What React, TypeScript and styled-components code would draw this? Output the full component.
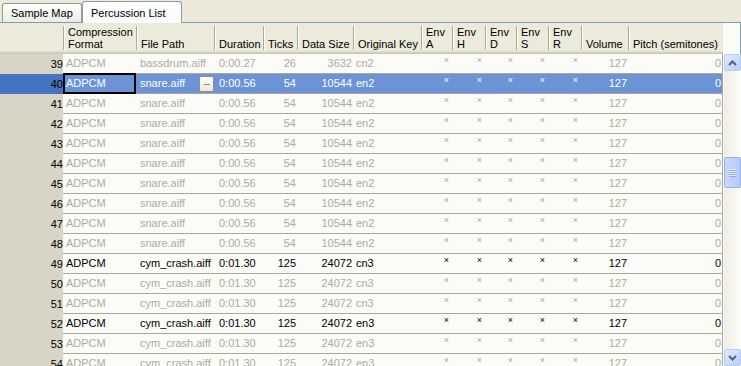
import styled, { createGlobalStyle } from 'styled-components';

const COLS = '63px 73px 78px 49px 34px 56px 68px 31px 33px 31px 32px 33px 47px 95px';

const GlobalStyle = createGlobalStyle`
  html, body {
    margin: 0;
    padding: 0;
    background: #ece9d8;
  }
  body {
    font-family: "Liberation Sans", Arial, sans-serif;
    font-size: 11px;
    overflow: hidden;
  }
`;

const Window = styled.div`
  width: 741px;
  height: 366px;
  overflow: hidden;
  display: flex;
  flex-direction: column;
  background: #ece9d8;
`;

const TabStrip = styled.div`
  height: 23px;
  flex-shrink: 0;
  display: flex;
  align-items: flex-end;
  padding-left: 2px;
  border-bottom: 1px solid #7f9db9;
  box-sizing: border-box;
`;

const Tab = styled.div<{ $active?: boolean; $width: number }>`
  width: ${(p) => p.$width}px;
  height: ${(p) => (p.$active ? 22 : 19)}px;
  margin-bottom: ${(p) => (p.$active ? '-1px' : '0')};
  padding-left: 8px;
  box-sizing: border-box;
  border: 1px solid #919b9c;
  border-bottom: none;
  border-radius: 3px 3px 0 0;
  background: ${(p) => (p.$active ? '#fcfcfe' : 'linear-gradient(#ffffff, #ecebe6)')};
  display: flex;
  align-items: center;
  color: #000;
  z-index: ${(p) => (p.$active ? 1 : 0)};
`;

const HeaderRow = styled.div`
  display: grid;
  grid-template-columns: ${COLS} 18px;
  height: 31px;
  flex-shrink: 0;
  background: #ebeadb;
  box-shadow: inset 0 -1px #cbc7b8, inset 0 -2px #d6d2c2, inset 0 -3px #e2decd;
`;

const HeaderCell = styled.div<{ $first?: boolean }>`
  margin: 3px 0 4px;
  padding-left: 4px;
  border-left: ${(p) => (p.$first ? 'none' : '1px solid #aca899')};
  box-shadow: ${(p) => (p.$first ? 'none' : 'inset 1px 0 #ffffff')};
  display: flex;
  flex-direction: column;
  justify-content: flex-end;
  line-height: 12px;
  white-space: nowrap;
  overflow: hidden;
  color: #000;
`;

const HeaderFiller = styled.div`
  background: #fbfbf7;
  border-right: 1px solid #7f9db9;
`;

const Body = styled.div`
  flex: 1;
  display: flex;
  overflow: hidden;
  background: #fbfbf7;
`;

const Rows = styled.div`
  width: 723px;
  display: flex;
  flex-direction: column;
  background: linear-gradient(90deg, #d8d5c7 63px, #fbfbf7 63px);
`;

const Row = styled.div`
  display: grid;
  grid-template-columns: ${COLS};
  height: 20px;
  flex-shrink: 0;
`;

const RowHeader = styled.div<{ $selected?: boolean }>`
  background: ${(p) => (p.$selected ? '#4573bf' : '#d8d5c7')};
  color: #000;
  text-align: right;
  line-height: 20px;
`;

type Tone = 'grey' | 'black' | 'selected';

const Cell = styled.div<{ $tone: Tone; $align?: 'left' | 'right'; $last?: boolean; $current?: boolean }>`
  box-sizing: border-box;
  height: 20px;
  line-height: 19px;
  padding: ${(p) => (p.$align === 'right' ? '0 1px 0 0' : '0 0 0 3px')};
  text-align: ${(p) => p.$align ?? 'left'};
  border-bottom: 1px solid #aca899;
  border-right: ${(p) => (p.$last ? '1px solid #aca899' : 'none')};
  background: ${(p) => (p.$tone === 'selected' ? '#6b93d6' : 'transparent')};
  color: ${(p) => (p.$tone === 'selected' ? '#ffffff' : p.$tone === 'black' ? '#000000' : '#acaba0')};
  white-space: nowrap;
  overflow: hidden;
  display: flex;
  align-items: center;
  justify-content: ${(p) => (p.$align === 'right' ? 'flex-end' : 'flex-start')};
  outline: ${(p) => (p.$current ? '2px solid #000' : 'none')};
  outline-offset: -2px;
  margin-top: ${(p) => (p.$current ? '-1px' : '0')};
  height: ${(p) => (p.$current ? '21px' : '20px')};
`;

const PathText = styled.span`
  flex: 1;
  padding-left: 1px;
`;

const EllipsisButton = styled.div`
  width: 15px;
  height: 16px;
  margin-right: 0;
  margin-top: 1px;
  box-sizing: border-box;
  border: 1px solid #8e8f8f;
  border-radius: 2px;
  background: linear-gradient(#ffffff, #ece9d8);
  color: #000;
  font-size: 9px;
  line-height: 11px;
  text-align: center;
  letter-spacing: -0.5px;
`;

const EnvMark = styled.span`
  font-size: 9px;
  line-height: 9px;
  padding-right: 2px;
  transform: translateY(-3px);
`;

const ScrollBar = styled.div`
  width: 17px;
  margin-left: 1px;
  display: flex;
  flex-direction: column;
  background: linear-gradient(90deg, #eeede5, #fdfdfa);
`;

const ScrollButton = styled.div`
  width: 17px;
  height: 17px;
  flex-shrink: 0;
  box-sizing: border-box;
  border: 1px solid #b8cbf6;
  border-radius: 2px;
  background: linear-gradient(135deg, #e3ebfe, #bacdf9);
  display: flex;
  align-items: center;
  justify-content: center;
`;

const Track = styled.div`
  flex: 1;
  display: flex;
  flex-direction: column;
`;

const Thumb = styled.div`
  margin-top: 86px;
  width: 17px;
  height: 31px;
  box-sizing: border-box;
  border: 1px solid #98b1e7;
  border-radius: 2px;
  background: linear-gradient(90deg, #c9d8fc, #b6cbfa);
  display: flex;
  flex-direction: column;
  align-items: center;
  justify-content: center;
  gap: 1px;
`;

const Grip = styled.div`
  width: 7px;
  height: 1px;
  background: #eef3ff;
  box-shadow: 0 1px #8ca8e6;
`;

const Arrow = ({ up }: { up?: boolean }) => (
  <svg width="9" height="6" viewBox="0 0 9 6">
    <path
      d={up ? 'M1 5 L4.5 1.5 L8 5' : 'M1 1 L4.5 4.5 L8 1'}
      fill="none"
      stroke="#4d6185"
      strokeWidth="2"
    />
  </svg>
);

type RowData = {
  n: number;
  path: string;
  dur: string;
  ticks: string;
  size: string;
  key: string;
  tone: Tone;
};

const snare = (n: number): RowData => ({ n, path: 'snare.aiff', dur: '0:00.56', ticks: '54', size: '10544', key: 'en2', tone: 'grey' });
const cym = (n: number, key: string, tone: Tone = 'grey'): RowData => ({ n, path: 'cym_crash.aiff', dur: '0:01.30', ticks: '125', size: '24072', key, tone });

const rows: RowData[] = [
  { n: 39, path: 'bassdrum.aiff', dur: '0:00.27', ticks: '26', size: '3632', key: 'cn2', tone: 'grey' },
  { ...snare(40), tone: 'selected' },
  snare(41),
  snare(42),
  snare(43),
  snare(44),
  snare(45),
  snare(46),
  snare(47),
  snare(48),
  cym(49, 'cn3', 'black'),
  cym(50, 'cn3'),
  cym(51, 'cn3'),
  cym(52, 'en3', 'black'),
  cym(53, 'en3'),
  cym(54, 'en3'),
];

const headers: string[][] = [
  [''],
  ['Compression', 'Format'],
  ['File Path'],
  ['Duration'],
  ['Ticks'],
  ['Data Size'],
  ['Original Key'],
  ['Env', 'A'],
  ['Env', 'H'],
  ['Env', 'D'],
  ['Env', 'S'],
  ['Env', 'R'],
  ['Volume'],
  ['Pitch (semitones)'],
];

export default function App() {
  return (
    <Window>
      <GlobalStyle />
      <TabStrip>
        <Tab $width={80}>Sample Map</Tab>
        <Tab $width={100} $active>Percussion List</Tab>
      </TabStrip>
      <HeaderRow>
        {headers.map((lines, i) => (
          <HeaderCell key={i} $first={i === 0}>
            {lines.map((l, j) => (
              <span key={j}>{l}</span>
            ))}
          </HeaderCell>
        ))}
        <HeaderFiller />
      </HeaderRow>
      <Body>
        <Rows>
          {rows.map((r) => {
            const sel = r.tone === 'selected';
            return (
              <Row key={r.n}>
                <RowHeader $selected={sel}>{r.n}</RowHeader>
                <Cell $tone={r.tone} $current={sel}>ADPCM</Cell>
                <Cell $tone={r.tone}>
                  <PathText>{r.path}</PathText>
                  {sel && <EllipsisButton>...</EllipsisButton>}
                </Cell>
                <Cell $tone={r.tone} style={{ paddingLeft: 5 }}>{r.dur}</Cell>
                <Cell $tone={r.tone} $align="right">{r.ticks}</Cell>
                <Cell $tone={r.tone} $align="right">{r.size}</Cell>
                <Cell $tone={r.tone}>{r.key}</Cell>
                {['A', 'H', 'D', 'S', 'R'].map((e) => (
                  <Cell key={e} $tone={r.tone} $align="right">
                    <EnvMark>×</EnvMark>
                  </Cell>
                ))}
                <Cell $tone={r.tone} $align="right">{r.n >= 0 ? '127' : ''}</Cell>
                <Cell $tone={r.tone} $align="right" $last>0</Cell>
              </Row>
            );
          })}
        </Rows>
        <ScrollBar>
          <ScrollButton>
            <Arrow up />
          </ScrollButton>
          <Track>
            <Thumb>
              <Grip />
              <Grip />
              <Grip />
              <Grip />
            </Thumb>
          </Track>
          <ScrollButton>
            <Arrow />
          </ScrollButton>
        </ScrollBar>
      </Body>
    </Window>
  );
}
